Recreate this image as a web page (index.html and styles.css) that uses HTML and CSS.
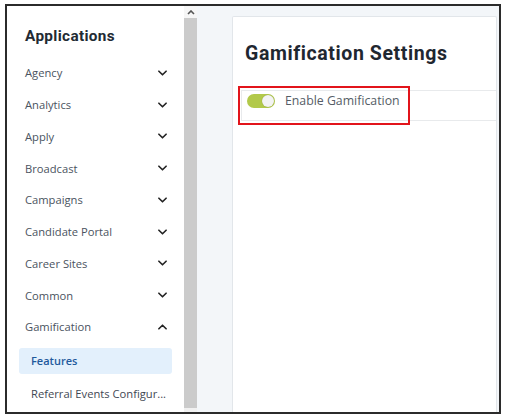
FILE: index.html
```html
<!DOCTYPE html>
<html>
<head>
<meta charset="utf-8">
<link rel="stylesheet" href="styles.css">
</head>
<body>
<div class="frame">
  <aside class="sidebar">
    <h2 class="side-title">Applications</h2>
    <ul class="menu">
      <li class="item"><span>Agency</span><svg class="chev" viewBox="0 0 10 6"><path d="M1 1l4 4 4-4"/></svg></li>
      <li class="item"><span>Analytics</span><svg class="chev" viewBox="0 0 10 6"><path d="M1 1l4 4 4-4"/></svg></li>
      <li class="item"><span>Apply</span><svg class="chev" viewBox="0 0 10 6"><path d="M1 1l4 4 4-4"/></svg></li>
      <li class="item"><span>Broadcast</span><svg class="chev" viewBox="0 0 10 6"><path d="M1 1l4 4 4-4"/></svg></li>
      <li class="item"><span>Campaigns</span><svg class="chev" viewBox="0 0 10 6"><path d="M1 1l4 4 4-4"/></svg></li>
      <li class="item"><span>Candidate Portal</span><svg class="chev" viewBox="0 0 10 6"><path d="M1 1l4 4 4-4"/></svg></li>
      <li class="item"><span>Career Sites</span><svg class="chev" viewBox="0 0 10 6"><path d="M1 1l4 4 4-4"/></svg></li>
      <li class="item"><span>Common</span><svg class="chev" viewBox="0 0 10 6"><path d="M1 1l4 4 4-4"/></svg></li>
      <li class="item"><span>Gamification</span><svg class="chev" viewBox="0 0 10 6"><path d="M1 5l4-4 4 4"/></svg></li>
      <li class="sub active">Features</li>
      <li class="sub">Referral Events Configur...</li>
    </ul>
  </aside>
  <div class="scrollbar">
    <div class="scroll-btn"><svg viewBox="0 0 8 5"><path d="M1 4l3-3 3 3"/></svg></div>
    <div class="scroll-thumb"></div>
  </div>
  <main class="main">
    <section class="card">
      <h1 class="card-title">Gamification Settings</h1>
      <div class="setting-row">
        <span class="toggle"><span class="knob"></span></span>
        <span class="setting-label">Enable Gamification</span>
        <div class="highlight"></div>
      </div>
    </section>
  </main>
</div>
</body>
</html>
```

FILE: styles.css
```css
* { box-sizing: border-box; }
html, body { margin: 0; padding: 0; background: #fff; }
body { width: 505px; height: 420px; overflow: hidden; font-family: "Open Sans", "DejaVu Sans", sans-serif; }

.frame {
  margin: 4px 4px 0 5px;
  width: 496px;
  height: 410px;
  border: 2px solid #2b2b2b;
  display: flex;
  overflow: hidden;
  background: #fff;
}

.sidebar {
  width: 177px;
  flex: none;
  background: #fff;
}
.side-title {
  margin: 0;
  padding: 21px 0 0 18px;
  height: 51px;
  font-family: "Roboto", "Lato", sans-serif;
  font-weight: 700;
  font-size: 15.3px;
  letter-spacing: 0.35px;
  color: #222a33;
}
.menu { list-style: none; margin: 0; padding: 0; }
.item {
  height: 31.75px;
  display: flex;
  align-items: center;
  justify-content: space-between;
  padding: 0 17px 0 18px;
  font-size: 11.2px;
  color: #4a5360;
  white-space: nowrap;
}
.chev { width: 9px; height: 6px; fill: none; stroke: #222; stroke-width: 1.8; stroke-linecap: round; stroke-linejoin: round; }
.sub {
  height: 26px;
  margin: 3px 12px 3px 12px;
  padding-left: 12px;
  display: flex;
  align-items: center;
  font-size: 11.2px;
  color: #3f4853;
  border-radius: 3px;
  white-space: nowrap;
  overflow: hidden;
}
.sub.active { margin-top: 5px; background: #e3f0fc; color: #1f5a9c; font-weight: 600; font-size: 11px; }
.sub + .sub { margin-top: 7px; }

.scrollbar {
  width: 13px;
  flex: none;
  display: flex;
  flex-direction: column;
  background: #f1f1f1;
}
.scroll-btn { height: 12px; display: flex; align-items: center; justify-content: center; background: #f6f6f6; }
.scroll-btn svg { width: 8px; height: 5px; fill: none; stroke: #555; stroke-width: 1.6; }
.scroll-thumb { flex: 1; background: #cbcbcb; margin-bottom: 4px; }

.main {
  flex: 1;
  background: #f3f6f9;
  padding: 10px 2px 0 35px;
  display: flex;
}
.card {
  flex: 1;
  background: #fff;
  border: 1px solid #e2e6ea;
  border-bottom: none;
  border-radius: 2px 2px 0 0;
}
.card-title {
  margin: 0;
  padding: 25px 0 0 12px;
  height: 73px;
  font-family: "Roboto", "Lato", sans-serif;
  font-weight: 700;
  font-size: 19.5px;
  letter-spacing: 0.6px;
  color: #1f2730;
}
.setting-row {
  position: relative;
  margin-left: 8px;
  height: 31px;
  border: 1px solid #e8eaec;
  border-right: none;
  display: flex;
  align-items: flex-start;
  padding: 2px 0 0 5px;
}
.toggle {
  margin-top: 1px;
  width: 28px;
  height: 14px;
  border-radius: 7px;
  background: #b2c94a;
  position: relative;
  flex: none;
}
.knob {
  position: absolute;
  right: 1px;
  top: 1px;
  width: 12px;
  height: 12px;
  border-radius: 50%;
  background: #f3f3f3;
  box-shadow: 0 0 1px rgba(0,0,0,0.3);
}
.setting-label {
  margin-left: 10px;
  font-size: 12.3px;
  line-height: 16px;
  color: #555d66;
}
.highlight {
  position: absolute;
  left: -4px;
  top: -5px;
  width: 172px;
  height: 39px;
  border: 2px solid #e2141b;
}
```
